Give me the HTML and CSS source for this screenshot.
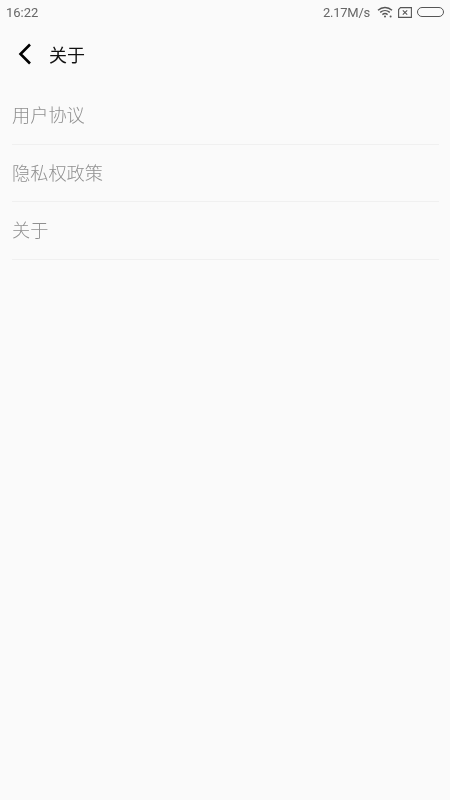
FILE: index.html
```html
<!DOCTYPE html>
<html lang="zh">
<head>
<meta charset="utf-8">
<title>关于</title>
<link rel="stylesheet" href="styles.css">
</head>
<body>
<div class="status">
  <span class="time">16:22</span>
  <div class="status-right">
    <span class="speed">2.17M/s</span>
    <svg class="wifi" width="16" height="12" viewBox="0 0 16 12" fill="none" stroke="#555" stroke-width="1.4">
      <path d="M1 4.2C5 .6 11 .6 15 4.2"/>
      <path d="M3.2 6.4C6 4 10 4 12.8 6.4"/>
      <path d="M5.4 8.6C6.9 7.4 9.1 7.4 10.6 8.6"/>
      <circle cx="8" cy="10.6" r="1" fill="#555" stroke="none"/>
      <circle cx="13.6" cy="10.6" r="1" fill="#555" stroke="none"/>
    </svg>
    <svg class="sim" width="14" height="11" viewBox="0 0 14 11" fill="none" stroke="#555" stroke-width="1.1">
      <path d="M2.5 .6H13.4V10.4H.6V2.5Z"/>
      <path d="M4.8 3.4L9.2 7.6M9.2 3.4L4.8 7.6"/>
    </svg>
    <span class="battery"></span>
  </div>
</div>
<header class="nav">
  <svg class="back" width="14" height="22" viewBox="0 0 14 22" fill="none" stroke="#000" stroke-width="2.6">
    <path d="M12 1.5L2.5 11L12 20.5"/>
  </svg>
  <h1 class="title">关于</h1>
</header>
<ul class="list">
  <li class="row">用户协议</li>
  <li class="row">隐私权政策</li>
  <li class="row">关于</li>
</ul>
</body>
</html>
```
FILE: styles.css
```css
* { box-sizing: border-box; }
html, body { margin: 0; padding: 0; }
body {
  width: 450px;
  height: 800px;
  overflow: hidden;
  background: #fafafa;
  font-family: "Noto Sans CJK SC", "Liberation Sans", sans-serif;
}
.status {
  height: 24px;
  padding: 0 6px;
  display: flex;
  align-items: center;
  justify-content: space-between;
  color: #666;
  font: 13px Roboto, "Liberation Sans", sans-serif;
  will-change: opacity;
}
.status-right { display: flex; align-items: center; }
.speed { margin-right: 7px; letter-spacing: -0.25px; }
.wifi { margin-right: 5px; }
.sim { margin-right: 5px; }
.battery {
  width: 27px;
  height: 10px;
  border: 1px solid #555;
  border-radius: 5px;
}
.nav {
  height: 62px;
  padding-left: 18px;
  padding-bottom: 2px;
  display: flex;
  align-items: center;
  will-change: opacity;
}
.back { margin-right: 17px; }
.title {
  margin: 0;
  font-size: 18px;
  font-weight: 400;
  color: #111;
}
.list {
  list-style: none;
  margin: 0;
  padding: 1px 11px 0 12px;
  will-change: opacity;
}
.row {
  height: 57.6px;
  padding-bottom: 2px;
  display: flex;
  align-items: center;
  font-size: 18.2px;
  font-weight: 300;
  color: #8f8f8f;
  border-bottom: 1px solid #f0f0f0;
}
```
